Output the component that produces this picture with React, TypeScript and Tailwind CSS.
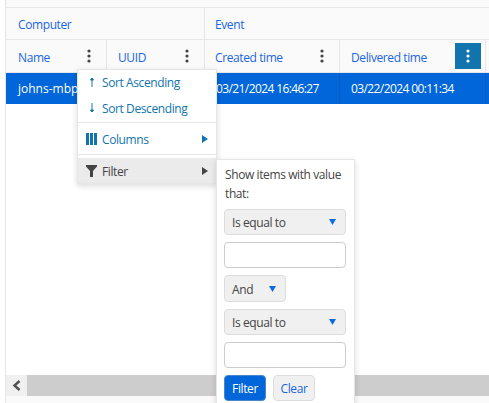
const Kebab = ({ active }: { active?: boolean }) => (
  <span className={active ? "flex h-[26px] w-[26px] items-center justify-center bg-[#1274ac]" : "flex h-[26px] w-[26px] items-center justify-center"}>
    <svg width="4" height="14" viewBox="0 0 4 14" className={active ? "fill-white" : "fill-[#444444]"}>
      <circle cx="2" cy="2" r="1.6" />
      <circle cx="2" cy="7" r="1.6" />
      <circle cx="2" cy="12" r="1.6" />
    </svg>
  </span>
);

const HeaderCell = ({ label, active, className }: { label: string; active?: boolean; className: string }) => (
  <div className={"flex items-center justify-between border-r border-[#e6e6e6] " + className}>
    <span className="pt-[3px] text-[#1a66e0]">{label}</span>
    <span className="mr-[4px]">{active ? <Kebab active /> : <Kebab />}</span>
  </div>
);

const CaretDown = () => (
  <svg width="7" height="6" viewBox="0 0 7 6" className="fill-[#0d6ddf]">
    <path d="M0 0h7L3.5 6z" />
  </svg>
);

const CaretRight = ({ color }: { color: string }) => (
  <svg width="6" height="8" viewBox="0 0 6 8" className={color}>
    <path d="M0 0l6 4-6 4z" />
  </svg>
);

const ArrowUp = () => (
  <svg width="8" height="10" viewBox="0 0 8 10" className="mb-[3px] ml-[2px] fill-[#1274ac] stroke-[#1274ac]">
    <path d="M4 10V1M2.5 3L4 1l1.5 2z" />
  </svg>
);

const ArrowDown = () => (
  <svg width="8" height="10" viewBox="0 0 8 10" className="mb-[1px] ml-[2px] fill-[#1274ac] stroke-[#1274ac]">
    <path d="M4 0v9M2.5 7L4 9l1.5-2z" />
  </svg>
);

const Select = ({ label, className }: { label: string; className: string }) => (
  <div className={"flex items-center justify-between rounded-[4px] border border-[#dddddd] bg-[#f0f0f0] pl-[7px] " + className}>
    <span className="pt-[2px]">{label}</span>
    <CaretDown />
  </div>
);

const TextBox = () => <div className="h-[26px] w-[122px] rounded-[4px] border border-[#cccccc] bg-white" />;

export default function App() {
  return (
    <div className="relative flex h-[403px] w-[489px] flex-col overflow-hidden bg-white font-['Open_Sans',sans-serif] text-[12px] tracking-[-0.4px] text-[#444444]">
      <div className="ml-[5px] flex flex-1 flex-col border-l border-[#e6e6e6]">
        <div className="h-[8px] border-b border-[#e6e6e6] bg-[#fafafa]" />
        {/* Group header */}
        <div className="flex h-[32px] border-b border-[#e6e6e6] bg-[#fafafa]">
          <div className="flex w-[199px] items-center border-r border-[#e6e6e6] pl-[12px] pt-[3px] text-[#1a66e0]">Computer</div>
          <div className="flex items-center pl-[10px] pt-[3px] text-[#1a66e0]">Event</div>
        </div>
        {/* Column header */}
        <div className="flex h-[33px] border-b border-[#e6e6e6] bg-[#fafafa]">
          <HeaderCell label="Name" className="w-[101px] pl-[12px]" />
          <HeaderCell label="UUID" className="w-[98px] pl-[11px]" />
          <HeaderCell label="Created time" className="w-[135px] pl-[10px]" />
          <HeaderCell label="Delivered time" active className="w-[146px] pl-[11px]" />
        </div>
        {/* Selected row */}
        <div className="flex h-[31px] bg-[#0066d9] text-white">
          <div className="flex w-[101px] items-center border-r border-[#0a5cbc] pl-[12px] pt-[1px] tracking-normal">johns-mbp</div>
          <div className="w-[98px] border-r border-[#0a5cbc]" />
          <div className="flex w-[135px] items-center border-r border-[#0a5cbc] pl-[11px] pt-[1px] tracking-[-0.6px]">03/21/2024 16:46:27</div>
          <div className="flex w-[146px] items-center border-r border-[#0a5cbc] pl-[11px] pt-[1px] tracking-[-0.6px]">03/22/2024 00:11:34</div>
          <div className="flex-1" />
        </div>
        <div className="flex-1" />
        {/* Horizontal scrollbar */}
        <div className="flex h-[21px] bg-[#cdcdcd]">
          <div className="flex w-[21px] items-center justify-center bg-[#f0f0f0]">
            <svg width="9" height="11" viewBox="0 0 9 11" className="fill-none stroke-[#505050] stroke-[2.4]">
              <path d="M7.5 1L2.5 5.5l5 4.5" />
            </svg>
          </div>
        </div>
        <div className="h-[7px] bg-[#fafafa]" />
      </div>

      {/* Column menu */}
      <div className="absolute left-[77px] top-[69px] flex h-[115px] w-[140px] flex-col border border-[#e6e6e6] bg-white text-[#1274ac] shadow-[0_2px_6px_rgba(0,0,0,0.15)]">
        <div className="flex h-[26px] items-center pl-[8px]"><span className="flex w-[16px]"><ArrowUp /></span><span>Sort Ascending</span></div>
        <div className="flex h-[25px] items-center pl-[8px]"><span className="flex w-[16px]"><ArrowDown /></span><span>Sort Descending</span></div>
        <div className="mt-[1px] flex h-[32px] items-center justify-between border-t border-[#e6e6e6] pr-[8px] pl-[8px]">
          <span className="flex items-center">
            <span className="flex w-[16px]">
              <svg width="11" height="12" viewBox="0 0 11 12" className="fill-[#1274ac]">
                <path d="M0 0h3v12H0zM4 0h3v12H4zM8 0h3v12H8z" />
              </svg>
            </span>
            <span className="pt-[2px]">Columns</span>
          </span>
          <CaretRight color="fill-[#1274ac]" />
        </div>
        <div className="flex-1 border-t border-[#e6e6e6]" />
        <div className="flex h-[25px] items-center justify-between bg-[#ebebeb] pr-[8px] pl-[8px] text-[#444444]">
          <span className="flex items-center">
            <span className="flex w-[16px]">
              <svg width="11" height="12" viewBox="0 0 11 12" className="fill-[#444444]">
                <path d="M0 0h11v1.5L7 6v6H4V6L0 1.5z" />
              </svg>
            </span>
            <span className="pt-[2px]">Filter</span>
          </span>
          <CaretRight color="fill-[#444444]" />
        </div>
      </div>

      {/* Filter popup */}
      <div className="absolute left-[216px] top-[159px] flex h-[260px] w-[139px] flex-col items-start border border-[#e6e6e6] bg-white pl-[7px] pt-[5px] shadow-[0_2px_6px_rgba(0,0,0,0.15)]">
        <div className="mb-[6px] w-[126px] pl-[1px] leading-[19px]">Show items with value that:</div>
        <div className="flex flex-col gap-[7px]">
          <Select label="Is equal to" className="h-[26px] w-[122px] pr-[9px]" />
          <TextBox />
          <Select label="And" className="h-[27px] w-[62px] pr-[9px]" />
          <Select label="Is equal to" className="h-[26px] w-[122px] pr-[9px]" />
          <TextBox />
          <div className="flex gap-[7px]">
            <button className="h-[26px] w-[42px] rounded-[4px] border border-[#4a86c8] bg-[#0066d9] pt-[1px] text-white">Filter</button>
            <button className="h-[26px] w-[42px] rounded-[4px] border border-[#dddddd] bg-[#f0f0f0] pt-[1px] text-[#1a66e0]">Clear</button>
          </div>
        </div>
      </div>
    </div>
  );
}
